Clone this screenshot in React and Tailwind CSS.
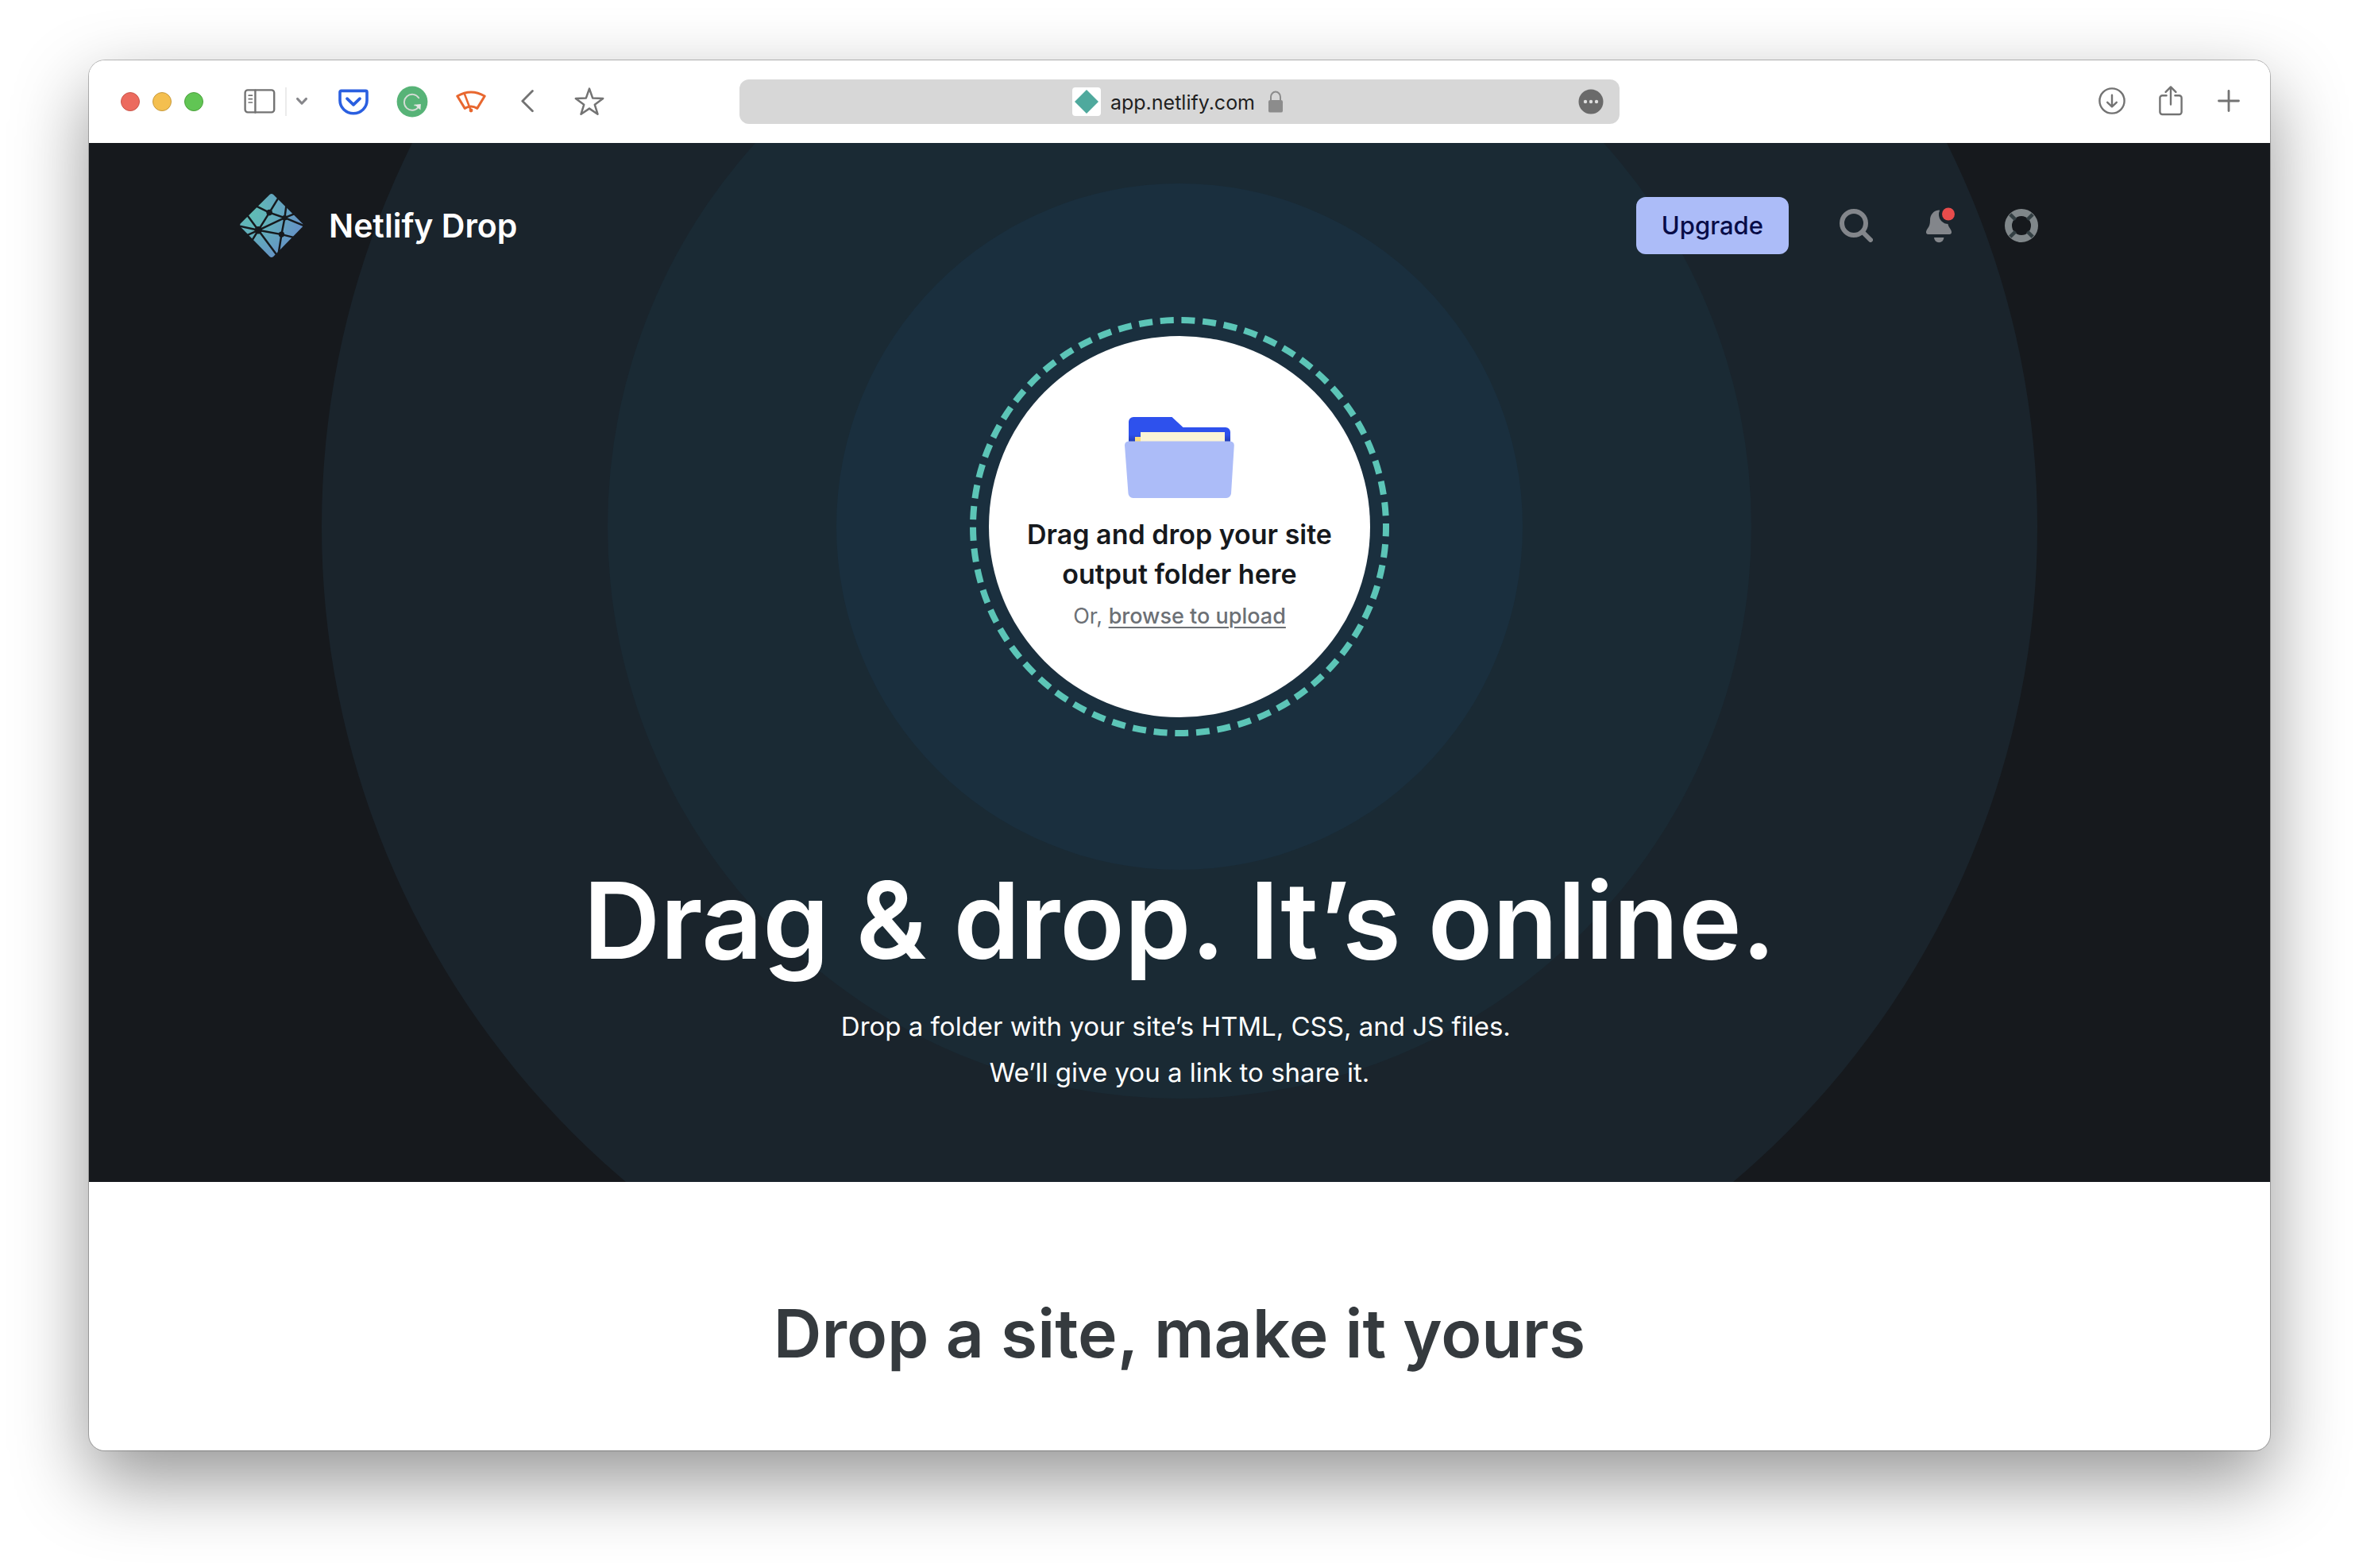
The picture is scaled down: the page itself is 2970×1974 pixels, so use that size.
const iconProps = {
  fill: "none",
  strokeLinecap: "round",
  strokeLinejoin: "round",
  "aria-hidden": true,
};

function SidebarIcon() {
  return (
    <svg {...iconProps} width="40" height="32" viewBox="0 0 40 32" stroke="#737373" strokeWidth="2.4">
      <rect x="1.6" y="1.4" width="36.6" height="28" rx="3.4" />
      <path d="M14.4 1.600v28" />
      <path d="M6.2 8.200h4.2M6.2 12.600h4.2M6.2 17h4.2" strokeWidth="1.7" />
    </svg>
  );
}

function PocketIcon() {
  return (
    <svg {...iconProps} width="38" height="33" viewBox="0 0 38 33" stroke="#2a5fe0" strokeWidth="3.8">
      <path d="M3.6 2.4h30.8a1.6 1.6 0 0 1 1.6 1.6v10.6a17 16.2 0 0 1-34 0V4a1.6 1.6 0 0 1 1.6-1.6z" strokeWidth="3.6" />
      <path d="M11 12.2l8 7.6 8-7.6" />
    </svg>
  );
}

function GrammarlyIcon() {
  return (
    <svg width="40" height="40" viewBox="0 0 40 40" fill="none" aria-hidden="true">
      <circle cx="20" cy="20" r="19.4" fill="#57b377" />
      <path d="M28.2 15.2A10 10 0 1 0 28 26.6l1.4-2.2h-6.2" stroke="#d5dcd6" strokeWidth="1.9" strokeLinecap="round" strokeLinejoin="round" />
      <path d="M23.6 24.2l7.2-1.2-.4 7.4z" fill="#e4e8e4" />
    </svg>
  );
}

function WiperIcon() {
  return (
    <svg {...iconProps} width="38" height="28" viewBox="0 0 38 28" stroke="#e8672f" strokeWidth="2.6">
      <path d="M1.800 7Q19-3 36.200 7L26.800 22.400Q19 17.800 11.200 22.400z" strokeWidth="3" />
      <path d="M10.6 3.6L18.6 24.6" />
      <circle cx="19" cy="25" r="1.5" fill="#e8672f" strokeWidth="1.8" />
    </svg>
  );
}

function StarIcon() {
  return (
    <svg {...iconProps} width="38" height="36" viewBox="0 0 38 36" stroke="#737373" strokeWidth="2.5">
      <path d="M19 1.600l4.2 12 13 .3-10.4 7.9 3.7 11.9L19 26.600 8.5 33.700l3.7-11.9L1.8 13.900l13-.3z" />
    </svg>
  );
}

function LockIcon() {
  return (
    <svg width="20" height="28" viewBox="0 0 20 28" fill="none" aria-hidden="true">
      <path d="M4 13V8a6 6.4 0 0 1 12 0v5" stroke="#8c8c8c" strokeWidth="2" />
      <rect x="1" y="12" width="18" height="15.6" rx="2.2" fill="#8c8c8c" />
    </svg>
  );
}

function DownloadIcon() {
  return (
    <svg {...iconProps} width="34" height="34" viewBox="0 0 34 34" stroke="#737373" strokeWidth="2.4">
      <circle cx="17" cy="17" r="15.6" />
      <path d="M17 9.6v14.6M11.2 18.8l5.8 5.6 5.8-5.6" />
    </svg>
  );
}

function ShareIcon() {
  return (
    <svg {...iconProps} width="30" height="38" viewBox="0 0 30 38" stroke="#737373" strokeWidth="2.4">
      <path d="M9.6 12.2H4.4a3 3 0 0 0-3 3V33a3 3 0 0 0 3 3h21.2a3 3 0 0 0 3-3V15.200a3 3 0 0 0-3-3h-5.200" />
      <path d="M15 23.600V1.800M8.600 7.800L15 1.400l6.400 6.400" />
    </svg>
  );
}

function NetlifyLogo() {
  return (
    <svg width="80" height="80" viewBox="15 14 241 241" aria-hidden="true">
      <defs>
        <radialGradient id="logo-fill" gradientUnits="userSpaceOnUse" cx="60" cy="90" r="190">
          <stop offset="0" stopColor="#5fbcb4" />
          <stop offset="0.25" stopColor="#61b5b8" />
          <stop offset="1" stopColor="#6592c6" />
        </radialGradient>
        <mask id="logo-lines" maskUnits="userSpaceOnUse" x="0" y="0" width="270" height="270">
          <rect width="270" height="270" fill="#fff" />
          <g stroke="#000" strokeWidth="7.500">
            <path d="M127 85L78 61M127 85L162 28M127 85L185 105M127 85L85 152" />
            <path d="M85 152L42 94M85 152L6 135M85 152L36 174M85 152L58 196M85 152L158 250M85 152L173 168M85 152L185 105" />
            <path d="M185 105L191 58M185 105L226 88M185 105L260 136M185 105L173 168" />
            <path d="M173 168L222 180M173 168L160 250" />
          </g>
          <circle cx="127" cy="85" r="11.500" fill="#000" />
          <circle cx="185" cy="105" r="10" fill="#000" />
          <circle cx="85" cy="152" r="14.500" fill="#000" />
          <circle cx="173" cy="168" r="11" fill="#000" />
        </mask>
      </defs>
      <path
        mask="url(#logo-lines)"
        fill="url(#logo-fill)"
        d="M128 17q7-6 14 0L252 126q6 7 0 14L142 252q-7 6-14 0L18 140q-6-7 0-14z"
      />
    </svg>
  );
}

function FolderIcon() {
  return (
    <svg width="138" height="102" viewBox="0 0 138 102" aria-hidden="true">
      <defs>
        <linearGradient id="folder-back" x1="0" y1="0" x2="0" y2="34" gradientUnits="userSpaceOnUse">
          <stop offset="0.650" stopColor="#2e51ed" />
          <stop offset="0.920" stopColor="#213bb0" />
        </linearGradient>
      </defs>
      <path d="M5 34V6a6 6 0 0 1 6-6h48.500L73.500 13H127a6 6 0 0 1 6 6v15z" fill="url(#folder-back)" />
      <path d="M13 25h20v9H13z" fill="#fbdc7c" />
      <path d="M20 19h106v15H20z" fill="#fbf4d6" />
      <path d="M4.800 30.500h128a5 5 0 0 1 5 5.200l-3.800 60.600a6 6 0 0 1-6 5.700H10.500a6 6 0 0 1-6-5.700L0 35.700a5 5 0 0 1 4.800-5.200z" fill="#acbcf8" />
    </svg>
  );
}

function SearchIcon() {
  return (
    <svg width="42" height="42" viewBox="0 0 42 42" fill="none" stroke="#83868b" aria-hidden="true">
      <circle cx="18" cy="18" r="15" strokeWidth="6" />
      <path d="M29.500 29.500l9.500 9.500" strokeWidth="6" strokeLinecap="round" />
    </svg>
  );
}

function BellIcon() {
  return (
    <svg width="36" height="48" viewBox="0 0 36 48" aria-hidden="true">
      <defs>
        <mask id="bell-cut">
          <rect width="36" height="48" fill="#fff" />
          <circle cx="28" cy="10" r="12" fill="#000" />
        </mask>
      </defs>
      <g fill="#83868b">
        <path
          mask="url(#bell-cut)"
          d="M16 4.500C9 5 5 11 5 17c0 5-1 8-3 10.500C.5 29.500 0 31 0 32.500 0 34 1 35 2.500 35h27c1.500 0 2.500-1 2.500-2.500 0-1.500-.5-3-2-5-2-2.500-3-5.500-3-10.500 0-6-4-12-11-12.500z"
        />
        <path d="M10 39h12.400a6.200 6.200 0 0 1-12.400 0z" />
      </g>
      <circle cx="28" cy="9.500" r="8" fill="#e84c4c" />
    </svg>
  );
}

function LifebuoyIcon() {
  return (
    <svg width="42" height="42" viewBox="0 0 42 42" fill="none" aria-hidden="true">
      <circle cx="21" cy="21" r="16.500" stroke="#80878a" strokeWidth="9" />
      <path
        d="M13.500 13.500L6.800 6.800M28.500 13.500l6.700-6.700M13.500 28.500l-6.700 6.700M28.500 28.500l6.700 6.700"
        stroke="#333f43"
        strokeWidth="4.500"
      />
    </svg>
  );
}

function Toolbar() {
  return (
    <div className="grid h-26 grid-cols-[1fr_1108px_1fr] items-center bg-white">
      <div className="flex items-center pl-10">
        <div className="flex gap-4">
          <button aria-label="Close window" className="size-6 rounded-full border border-[#c9564b] bg-[#ec6a5e]" />
          <button aria-label="Minimize window" className="size-6 rounded-full border border-[#c79a3e] bg-[#f4bf4f]" />
          <button aria-label="Zoom window" className="size-6 rounded-full border border-[#4ba03c] bg-[#61c554]" />
        </div>
        <button aria-label="Show sidebar" className="ml-[51px]">
          <SidebarIcon />
        </button>
        <div className="ml-3 flex h-9 items-center border-l-2 border-[#ebebeb] pl-[11px]">
          <button aria-label="Sidebar options">
            <svg {...iconProps} width="16" height="12" viewBox="0 0 16 12" stroke="#86868a" strokeWidth="3">
              <path d="M2.500 2.400L8 8.200l5.500-5.800" />
            </svg>
          </button>
        </div>
        <button aria-label="Save to Pocket" className="ml-[38px]">
          <PocketIcon />
        </button>
        <button aria-label="Grammarly" className="ml-[35px]">
          <GrammarlyIcon />
        </button>
        <button aria-label="Wipr" className="ml-[35px]">
          <WiperIcon />
        </button>
        <button aria-label="Back" className="ml-11">
          <svg {...iconProps} width="16" height="30" viewBox="0 0 16 30" stroke="#737373" strokeWidth="2.800">
            <path d="M14.400 1.600L1.800 14.200l12.600 12.600" />
          </svg>
        </button>
        <button aria-label="Bookmarks" className="ml-[51px]">
          <StarIcon />
        </button>
      </div>

      <div className="grid h-14 grid-cols-[1fr_auto_1fr] items-center rounded-xl bg-[#d7d7d7]">
        <div className="col-start-2 flex items-center pr-1">
          <span className="flex size-9 items-center justify-center rounded bg-white">
            <svg width="30" height="30" viewBox="0 0 30 30" aria-hidden="true">
              <path d="M15 0l15 15-15 15L0 15z" fill="#4fa99d" />
            </svg>
          </span>
          <input
            aria-label="Address"
            readOnly
            value="app.netlify.com"
            className="ml-3 field-sizing-content bg-transparent pt-[2px] text-[25px] leading-9 text-[#1f1f1f] outline-none"
          />
          <span className="ml-4">
            <LockIcon />
          </span>
        </div>
        <button aria-label="Page settings" className="mr-5 justify-self-end">
          <svg width="32" height="32" viewBox="0 0 32 32" aria-hidden="true">
            <circle cx="16" cy="16" r="15.500" fill="#6a6a6a" />
            <g fill="#dedede">
              <circle cx="9" cy="16" r="2.200" />
              <circle cx="16" cy="16" r="2.200" />
              <circle cx="23" cy="16" r="2.200" />
            </g>
          </svg>
        </button>
      </div>

      <div className="flex items-center justify-end pr-[38px] pb-[2px]">
        <button aria-label="Downloads">
          <DownloadIcon />
        </button>
        <button aria-label="Share" className="ml-[42px]">
          <ShareIcon />
        </button>
        <button aria-label="New tab" className="ml-11">
          <svg {...iconProps} width="28" height="28" viewBox="0 0 28 28" stroke="#737373" strokeWidth="2.800">
            <path d="M14 1.500v25M1.500 14h25" />
          </svg>
        </button>
      </div>
    </div>
  );
}

function Ripples() {
  return (
    <>
      <div className="absolute top-1/2 left-1/2 -z-10 size-[2160px] -translate-1/2 rounded-full bg-[#1a242c]" />
      <div className="absolute top-1/2 left-1/2 -z-10 size-[1440px] -translate-1/2 rounded-full bg-[#1a2a34]" />
      <div className="absolute top-1/2 left-1/2 -z-10 size-[864px] -translate-1/2 rounded-full bg-[#1a2f3e]" />
    </>
  );
}

function DropZone() {
  return (
    <div className="relative mx-auto mt-[75px] grid w-fit place-items-center">
      <Ripples />
      <svg width="528" height="528" viewBox="0 0 528 528" fill="none" aria-hidden="true" className="col-start-1 row-start-1">
        <circle
          cx="264"
          cy="264"
          r="260"
          stroke="#5cc5b7"
          strokeWidth="8"
          strokeDasharray="17 9.780"
          strokeDashoffset="4.700"
        />
      </svg>
      <div className="col-start-1 row-start-1 flex size-120 flex-col items-center rounded-full bg-white pt-[102px] text-center">
        <FolderIcon />
        <h2 className="mt-[21px] text-[34px] leading-[50px] font-semibold text-[#16191d]">
          Drag and drop your site
          <br />
          output folder here
        </h2>
        <p className="mt-2 text-[27px] leading-10 text-[#6c7075]">
          Or,{" "}
          <a href="#upload" className="font-medium underline decoration-2 underline-offset-4">
            browse to upload
          </a>
        </p>
      </div>
    </div>
  );
}

function Hero() {
  return (
    <div className="relative isolate overflow-hidden bg-[#16191d] pt-16 pb-[109px] text-white">
      <header className="flex items-center justify-between pr-[292px] pl-[190px]">
        <a href="#home" className="flex items-center gap-8">
          <NetlifyLogo />
          <span className="text-[41px] leading-[60px] font-semibold">Netlify Drop</span>
        </a>
        <nav className="flex items-center">
          <button className="h-18 rounded-xl bg-[#acbcf8] px-8 text-[31px] leading-10 font-medium text-[#080c47]">
            Upgrade
          </button>
          <button aria-label="Search" className="ml-16">
            <SearchIcon />
          </button>
          <button aria-label="Notifications" className="ml-[67px]">
            <BellIcon />
          </button>
          <button aria-label="Help" className="ml-[63px]">
            <LifebuoyIcon />
          </button>
        </nav>
      </header>

      <DropZone />

      <h1 className="mt-[151px] text-center text-[134px] leading-[160px] font-semibold">
        Drag &amp; drop. It’s online.
      </h1>
      <p className="mt-[25px] text-center text-[33px] leading-[58px]">
        Drop a folder with your site’s HTML, CSS, and JS files.&nbsp;
        <br />
        We’ll give you a link to share it.
      </p>
    </div>
  );
}

export default function App() {
  return (
    <div className="bg-white px-28 pt-19 pb-37 font-['Inter',sans-serif]">
      <main className="overflow-hidden rounded-[20px] bg-white shadow-[0_0_0_1px_rgba(0,0,0,0.25),0_38px_95px_rgba(0,0,0,0.42)]">
        <Toolbar />
        <Hero />
        <section className="pt-[135px] pb-[91px] text-center">
          <h2 className="text-[84px] leading-[112px] font-semibold text-[#353a3e]">Drop a site, make it yours</h2>
        </section>
      </main>
    </div>
  );
}
